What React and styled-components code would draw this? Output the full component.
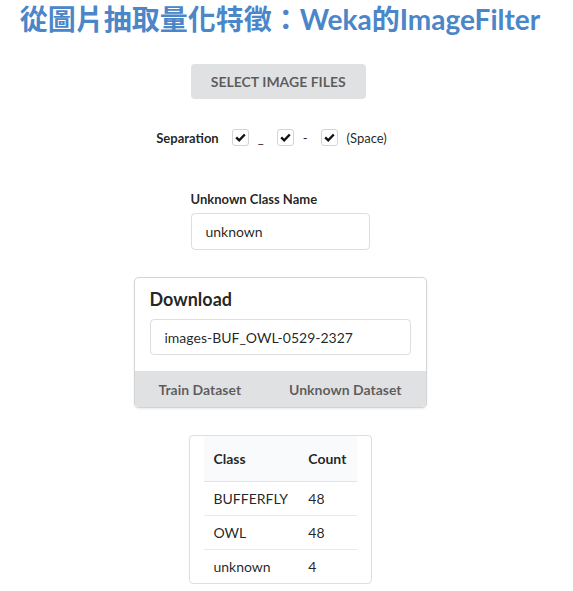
import React from "react";
import styled, { createGlobalStyle } from "styled-components";

const GlobalStyle = createGlobalStyle`
  body {
    margin: 0;
    background: #fff;
    font-family: Lato, "Noto Sans CJK TC", sans-serif;
    font-size: 14px;
    color: rgba(0, 0, 0, 0.87);
  }
`;

const Page = styled.div`
  display: flex;
  flex-direction: column;
  align-items: center;
  padding: 2px 13px 0 0;
`;

const Title = styled.h1`
  margin: 0;
  font-size: 28px;
  line-height: 34px;
  font-weight: 700;
  color: #4a86c8;
  font-family: Lato, "Noto Sans CJK TC", sans-serif;
`;

const Button = styled.button`
  margin: 28px 3.5px 0 0;
  width: 175px;
  height: 35px;
  border: none;
  border-radius: 4px;
  background: #e0e1e2;
  color: rgba(0, 0, 0, 0.6);
  font-family: Lato, sans-serif;
  font-size: 14px;
  font-weight: 700;
  text-transform: uppercase;
  cursor: pointer;
`;

const SepRow = styled.div`
  margin-top: 30px;
  display: flex;
  align-items: center;
  font-size: 13px;
  padding-right: 4px;
`;

const SepLabel = styled.span`
  font-weight: 700;
  margin-right: 13px;
`;

const Box = styled.span`
  width: 17px;
  height: 17px;
  box-sizing: border-box;
  border: 1px solid #d4d4d5;
  border-radius: 3px;
  display: inline-flex;
  align-items: center;
  justify-content: center;
`;

const SepText = styled.span`
  margin: 0 13px 0 9px;
  color: rgba(0, 0, 0, 0.87);
  font-size: 13px;
`;

const Field = styled.div`
  margin-top: 45px;
  width: 179px;
  display: flex;
  flex-direction: column;
`;

const FieldLabel = styled.label`
  font-size: 13px;
  font-weight: 700;
  margin-bottom: 6px;
`;

const Input = styled.div`
  box-sizing: border-box;
  width: 100%;
  height: ${(p) => p.$height || 37}px;
  border: 1px solid rgba(34, 36, 38, 0.15);
  border-radius: 4px;
  padding: 0 14px;
  display: flex;
  align-items: center;
  font-size: 14px;
  color: rgba(0, 0, 0, 0.87);
`;

const Card = styled.div`
  margin-top: 28px;
  width: 291px;
  box-sizing: border-box;
  border-radius: 4px;
  background: #fff;
  box-shadow: 0 1px 3px 0 #d4d4d5, 0 0 0 1px #d4d4d5;
  overflow: hidden;
`;

const CardBody = styled.div`
  padding: 10px 15px 16px;
`;

const CardTitle = styled.div`
  font-size: 18px;
  font-weight: 700;
  line-height: 23px;
  margin-bottom: 8px;
`;

const CardFooter = styled.div`
  display: flex;
  background: #e0e1e2;
  height: 36px;
`;

const FooterButton = styled.div`
  flex: 1 1 auto;
  padding: 0 8px;
  display: flex;
  align-items: center;
  justify-content: center;
  font-weight: 700;
  font-size: 14px;
  color: rgba(0, 0, 0, 0.6);
`;

const TableWrap = styled.div`
  margin-top: 28px;
  box-sizing: border-box;
  width: 183px;
  border: 1px solid rgba(34, 36, 38, 0.15);
  border-radius: 4px;
  padding: 0 14px;
`;

const Table = styled.table`
  width: 100%;
  border-collapse: collapse;
  font-size: 14px;
`;

const Th = styled.th`
  text-align: left;
  background: #f9fafb;
  font-weight: 700;
  height: 45px;
  padding: 0 10px;
  border-bottom: 1px solid rgba(34, 36, 38, 0.1);
`;

const Td = styled.td`
  height: 33px;
  padding: 0 10px;
  border-top: ${(p) => (p.$first ? "none" : "1px solid rgba(34, 36, 38, 0.1)")};
`;

const Check = () => (
  <Box>
    <svg width="11" height="9" viewBox="0 0 11 9">
      <path d="M1.2 4.4 L4.2 7.3 L9.8 1.5" fill="none" stroke="#111" strokeWidth="2.4" />
    </svg>
  </Box>
);

const rows = [
  ["BUFFERFLY", "48"],
  ["OWL", "48"],
  ["unknown", "4"],
];

export default function App() {
  return (
    <Page>
      <GlobalStyle />
      <Title>從圖片抽取量化特徵：Weka的ImageFilter</Title>
      <Button>Select Image Files</Button>
      <SepRow>
        <SepLabel>Separation</SepLabel>
        <Check />
        <SepText>_</SepText>
        <Check />
        <SepText>-</SepText>
        <Check />
        <SepText>(Space)</SepText>
      </SepRow>
      <Field>
        <FieldLabel>Unknown Class Name</FieldLabel>
        <Input>unknown</Input>
      </Field>
      <Card>
        <CardBody>
          <CardTitle>Download</CardTitle>
          <Input $height={36}>images-BUF_OWL-0529-2327</Input>
        </CardBody>
        <CardFooter>
          <FooterButton>Train Dataset</FooterButton>
          <FooterButton>Unknown Dataset</FooterButton>
        </CardFooter>
      </Card>
      <TableWrap>
        <Table>
          <thead>
            <tr>
              <Th>Class</Th>
              <Th>Count</Th>
            </tr>
          </thead>
          <tbody>
            {rows.map(([c, n], i) => (
              <tr key={c}>
                <Td $first={i === 0}>{c}</Td>
                <Td $first={i === 0}>{n}</Td>
              </tr>
            ))}
          </tbody>
        </Table>
      </TableWrap>
    </Page>
  );
}
